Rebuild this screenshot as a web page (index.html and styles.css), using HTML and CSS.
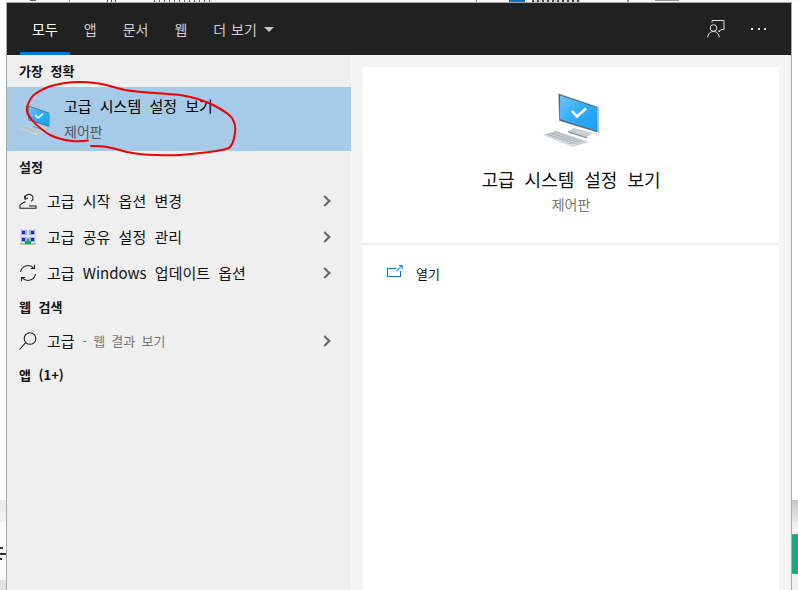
FILE: index.html
```html
<!DOCTYPE html>
<html lang="ko">
<head>
<meta charset="utf-8">
<title>검색</title>
<link rel="stylesheet" href="styles.css">
</head>
<body>
<div class="desk">
  <div class="desk-top"><i class="bit b1"></i><i class="bit b2"></i><i class="bit b3"></i><i class="bit b4"></i><i class="bit b5"></i><i class="bit b6"></i><i class="bit b7"></i><i class="bit b8"></i><i class="bit b9"></i></div>
  <div class="desk-left"><i class="mark m1"></i><i class="mark m2"></i><i class="mark m3"></i></div>
  <div class="desk-right"><span class="desk-pill"></span></div>
</div>
<main class="window">
  <header class="topbar">
    <nav class="tabs">
      <a class="tab active">모두</a>
      <a class="tab">앱</a>
      <a class="tab">문서</a>
      <a class="tab">웹</a>
      <a class="tab">더 보기<svg class="caret" width="10" height="5" viewBox="0 0 10 5"><path d="M0 0h10L5 5z" fill="#c4c4c4"/></svg></a>
    </nav>
    <div class="top-actions">
      <svg width="18" height="18" viewBox="0 0 18 18" fill="none" stroke="#e4e4e4" stroke-width="1"><path d="M5 2.500V.5h12v9h-3l-2 2.500V10"/><circle cx="6.500" cy="8" r="3.300"/><path d="M.7 17.500c.3-3.500 2.500-6 5.800-6s5.500 2.500 5.800 6"/></svg>
      <span class="dots"><i></i><i></i><i></i></span>
    </div>
  </header>
  <div class="body">
    <section class="results">
      <h2 class="group">가장 정확</h2>
      <div class="best">
        <svg class="best-icon" width="32" height="30" viewBox="0 0 57 54"><use href="#pc"/></svg>
        <div class="best-text">
          <div class="best-title">고급 시스템 설정 보기</div>
          <div class="best-sub">제어판</div>
        </div>
      </div>
      <h2 class="group">설정</h2>
      <div class="row">
        <svg class="ico" width="18" height="18" viewBox="0 0 18 18" fill="none" stroke="#222" stroke-width="1.100"><path d="M6 7.200c0-6.500 8-6 8-1 0 1.500-1 2.500-2 3.200M5.500 3.700l.5 3.500 3-1.200"/><path d="M6.500 9.500c-1 1.500-4 1.300-5.500 3.800v2.900h16v-2.200h-7"/></svg>
        <span class="label">고급 시작 옵션 변경</span><span class="chev"></span>
      </div>
      <div class="row">
        <svg class="ico" width="18" height="16" viewBox="0 0 16 16"><rect width="16" height="15" fill="#dfe3ea"/><path d="M1 1h6v5H1zM9 1h6v5H9zM1 8h6v5H1zM9 8h6v5H9z" fill="#9fb2de"/><path d="M2 2h3v3H2zM11 2h3v3h-3zM2 9h3v3H2zM11 9h3v3h-3z" fill="#1a28c8"/><rect y="14" width="16" height="2" fill="#b8c0b8"/><path d="M7 9.500h2V12h2v3H5v-3h2z" fill="#12a860"/></svg>
        <span class="label">고급 공유 설정 관리</span><span class="chev"></span>
      </div>
      <div class="row">
        <svg class="ico" width="18" height="18" viewBox="0 0 18 18" fill="none" stroke="#222" stroke-width="1.100"><path d="M1.500 8C2.500 2 10-1 15 4.300M15.500 .8v3.700h-3.700M16.500 10C15.500 16 8 19 3 13.700M2.500 17.200v-3.700h3.700"/></svg>
        <span class="label">고급 Windows 업데이트 옵션</span><span class="chev"></span>
      </div>
      <h2 class="group">웹 검색</h2>
      <div class="row">
        <svg class="ico" width="18" height="18" viewBox="0 0 18 18" fill="none" stroke="#222" stroke-width="1.100"><circle cx="11" cy="6.500" r="5.800"/><path d="M6.800 10.700L.5 17.500"/></svg>
        <span class="label">고급</span><span class="hint">- 웹 결과 보기</span><span class="chev"></span>
      </div>
      <h2 class="group">앱 (1+)</h2>
    </section>
    <section class="detail">
      <div class="card">
        <div class="hero">
          <svg class="hero-icon" width="57" height="54" viewBox="0 0 57 54"><use href="#pc"/></svg>
          <div class="hero-title">고급 시스템 설정 보기</div>
          <div class="hero-sub">제어판</div>
        </div>
        <div class="action">
          <svg class="action-icon" width="16" height="12" viewBox="0 0 16 12" fill="none" stroke="#0a6fc8" stroke-width="1.100"><path d="M9.500 3.500H.5v8h13V6"/><path d="M9.500 6L15 .8M11.800.6h3.500v3.500" stroke="#2a8fe8"/></svg>
          <span>열기</span>
        </div>
      </div>
    </section>
  </div>
</main>
<svg class="scribble" width="798" height="590" viewBox="0 0 798 590" fill="none"><path d="M88 140.500C82 141.500 77 141.500 72 141 63 140 56 138 50 135 42 130 36 125 32 120 28 115 26 112 27 107 29 101 31 97 35 94 39 91 43 89 48 87 63 82 80 81 95 83 106 84 115 88 125 90 143 93 162 93 180 95 193 97 203 100 213 105 221 109 228 113 232 118 235 123 236 128 235 133 234 140 233 145 229 148 221 151 211 152 200 153 185 155 171 156 157 155 146 155 136 154 127 152 120 150 113 148 107 147 101 146 96 146 91 146" stroke="#ee0000" stroke-width="2" stroke-linecap="round" stroke-linejoin="round"/></svg>
<svg class="defs" width="0" height="0"><defs><linearGradient id="scr" x1="0" y1="0" x2="1" y2="1"><stop offset="0" stop-color="#6cc5ff"/><stop offset=".5" stop-color="#2fabfb"/><stop offset="1" stop-color="#1b9ff2"/></linearGradient><g id="pc"><path d="M0 42l14-4 32 11-16 5z" fill="#d5dadd"/><path d="M2 42l12-3.500M5 43.200l12-3.700M8.500 44.500l12.500-3.800M12 45.700l12.500-3.800M15.500 47l12.500-3.800M19 48.200l12.500-3.800M22.500 49.500l12.500-3.800M26 50.800l12.500-3.800M4 41l31 10.500M7.500 40l31 10.500M11 39l31 10.500" stroke="#9fa9af" stroke-width=".6" fill="none"/><path d="M25 38l6-3 19 5-6 4z" fill="#c5d2d9"/><path d="M25 38l19 6v1.500L25 39.500z" fill="#87949c"/><path d="M15 0l41 14v26L16 28z" fill="#b9c2c8"/><path d="M15.800 1l38.400 13v25L16.500 27.500z" fill="#53606a"/><path d="M17 2.500l37 12.200V38L17 26.300z" fill="url(#scr)"/><path d="M29 18l5 5.500 9-8" stroke="#fff" stroke-width="2.600" fill="none"/></g></defs></svg>
</body>
</html>
```
FILE: styles.css
```css
* { box-sizing: border-box; }
html, body { margin: 0; height: 100%; overflow: hidden; background: #fff; }
body { font-family: "Noto Sans CJK KR", "Noto Sans", sans-serif; color: #111; width: 798px; height: 590px; position: relative; }
.desk-top { position: absolute; left: 0; top: 0; width: 798px; height: 3px; background: #fafafa; }
.bit { position: absolute; top: 0; height: 3px; background: #666; }
.b1 { left: 30px; width: 6px; height: 1px; }
.b2 { left: 69px; width: 1px; background: #aaa; }
.b3 { left: 107px; width: 12px; background: repeating-linear-gradient(90deg, #555 0 1px, transparent 1px 4px); }
.b4 { left: 154px; width: 56px; background: repeating-linear-gradient(90deg, #666 0 1px, transparent 1px 5px); }
.b5 { left: 476px; width: 1px; background: #999; }
.b6 { left: 509px; width: 16px; background: #0c6fbe; }
.b7 { left: 532px; width: 48px; background: repeating-linear-gradient(90deg, #444 0 2px, #ddd 2px 5px); }
.b8 { left: 627px; width: 2px; background: #999; }
.b9 { left: 655px; width: 24px; height: 1px; background: #999; }
.desk-left { position: absolute; left: 0; top: 500px; width: 6px; height: 90px; background: linear-gradient(#ebebeb, #f2f2f2 22px, #fafafa 22px, #fafafa 80px, #e2e2e2 80px); }
.mark { position: absolute; left: 0; background: #333; }
.m1 { top: 47px; width: 3px; height: 2px; }
.m2 { top: 53px; width: 6px; height: 2px; }
.m3 { top: 58px; width: 2px; height: 2px; }
.desk-right { position: absolute; right: 0; top: 500px; width: 7px; height: 90px; background: linear-gradient(#c8c8c8, #e8e8e8 22px, #f0f0f0 22px); }
.desk-pill { position: absolute; left: 0; top: 34px; width: 7px; height: 40px; background: #14ad7e; border-radius: 3px 0 0 3px; }
.window { position: absolute; left: 6px; top: 2px; width: 786px; height: 588px; border: 1px solid #a8a8a8; border-bottom: 0; display: flex; flex-direction: column; background: #f4f4f4; }
.topbar { height: 52px; background: #212121; display: flex; justify-content: space-between; align-items: stretch; padding: 0 25px 0 12px; flex: none; }
.tabs { display: flex; }
.tab { position: relative; display: flex; align-items: center; height: 52px; padding: 0 13px; color: #cfcfcf; font-size: 14px; word-spacing: 1px; }
.tab.active { color: #fff; }
.tab.active::after { content: ""; position: absolute; left: 1px; right: 1px; bottom: 0; height: 3px; background: #0078d7; }
.caret { margin-left: 7px; }
.top-actions { display: flex; align-items: center; gap: 26px; }
.dots { display: flex; gap: 4.5px; }
.dots i { width: 2px; height: 2px; background: #e4e4e4; }
.body { flex: 1; display: flex; min-height: 0; }
.results { width: 344px; background: #efefef; flex: none; }
.group { margin: 0; height: 32px; display: flex; align-items: center; padding: 0 0 2px 12px; font-size: 13px; font-weight: 700; word-spacing: 4px; color: #111; }
.best { height: 64px; background: #a6cbe8; display: flex; align-items: center; }
.best-icon { margin-left: 12px; margin-top: 2px; flex: none; }
.best-text { margin-left: 13px; margin-bottom: 3px; }
.best-title { font-size: 15px; line-height: 20px; word-spacing: 4px; color: #000; }
.best-sub { font-size: 14px; line-height: 18px; margin-top: 6px; color: #555; }
.row { height: 36px; display: flex; align-items: center; padding-left: 12px; font-size: 15px; position: relative; word-spacing: 4px; }
.ico { flex: none; margin-right: 10px; }
.label { color: #111; margin-bottom: 2px; }
.hint { color: #777; font-size: 13px; margin: 0 0 2px 8px; word-spacing: 2.5px; }
.chev { position: absolute; left: 314px; top: 14px; width: 8px; height: 8px; border-top: 2px solid #666; border-right: 2px solid #666; transform: rotate(45deg); }
.detail { flex: 1; padding: 12px 12px 0; min-width: 0; }
.card { background: #fff; height: 100%; width: 416px; }
.hero { height: 178px; border-bottom: 2px solid #efefef; display: flex; flex-direction: column; align-items: center; padding-top: 26px; }
.hero-icon { flex: none; }
.hero-title { font-size: 18px; line-height: 24px; margin-top: 20px; word-spacing: 5px; color: #111; }
.hero-sub { font-size: 14px; line-height: 18px; margin-top: 4px; color: #777; }
.action { display: flex; align-items: center; gap: 13px; height: 56px; padding-left: 24px; font-size: 13px; color: #111; }
.action-icon { margin-bottom: 5px; }
.scribble { position: absolute; left: 0; top: 0; pointer-events: none; }
.defs { position: absolute; }
```
